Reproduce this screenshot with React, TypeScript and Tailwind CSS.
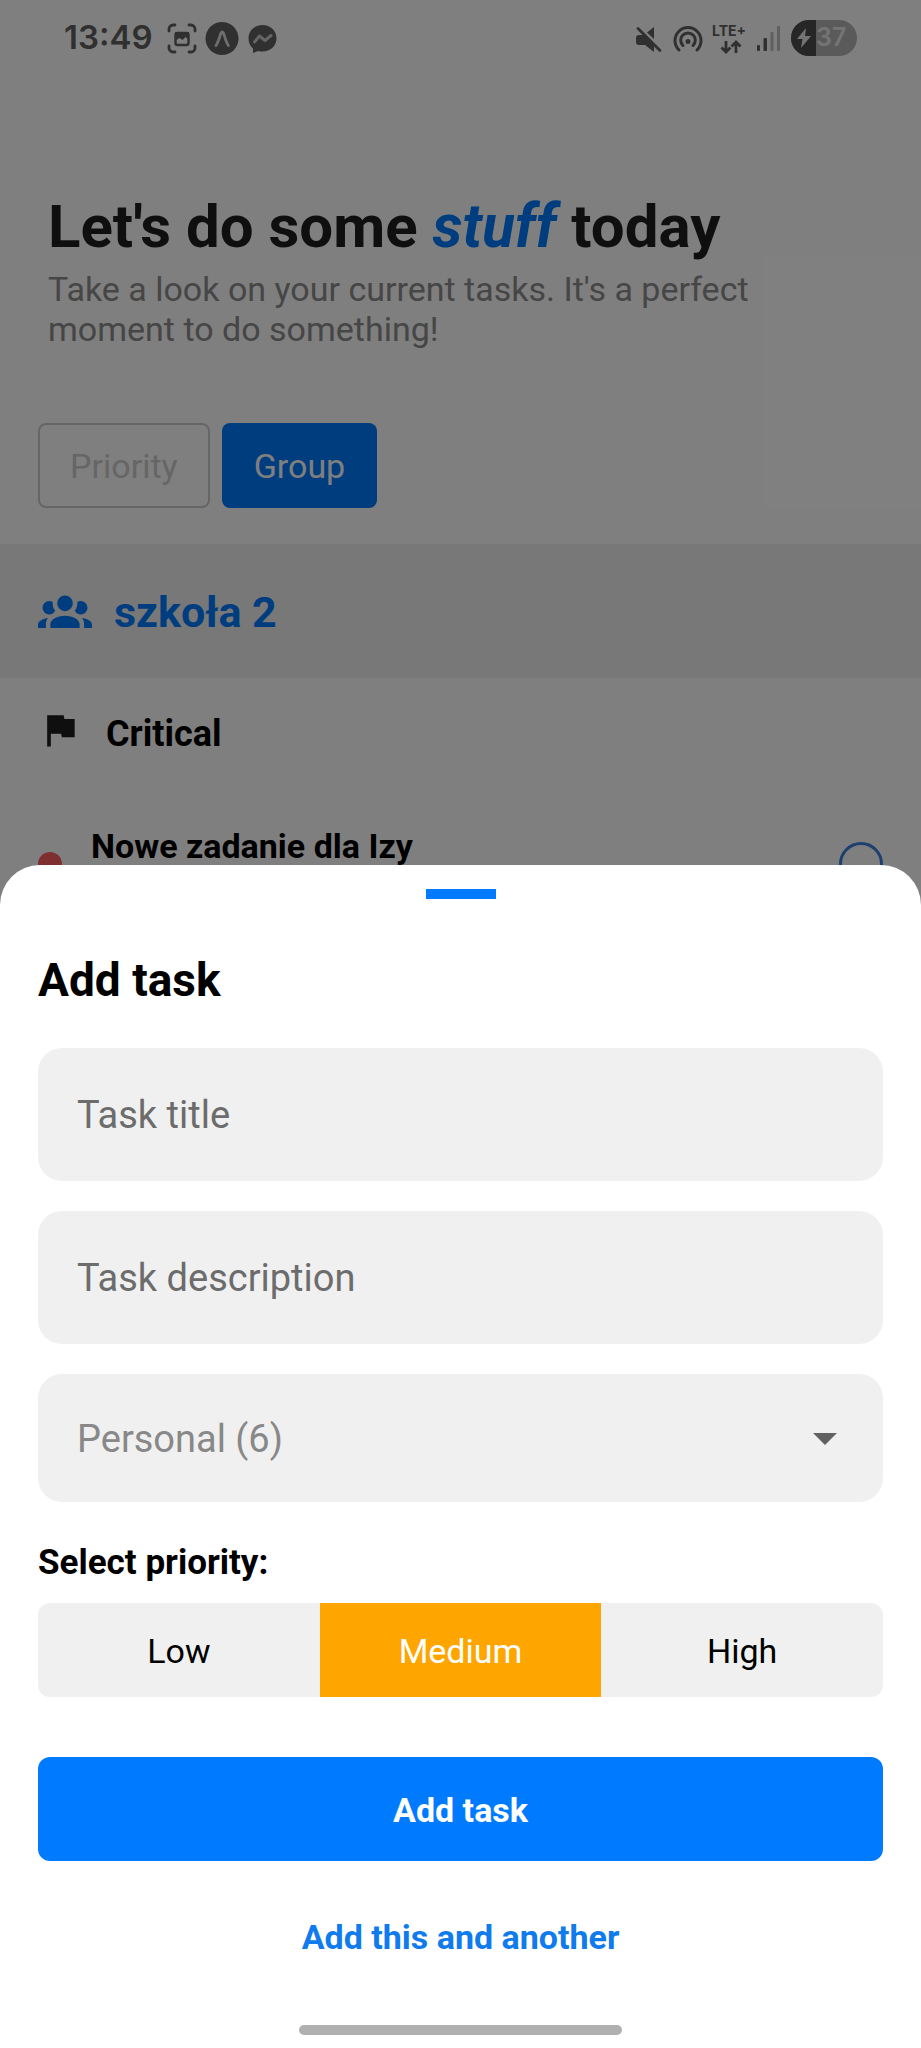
import { useState } from "react";

const FONT = "font-['Roboto','Liberation_Sans',sans-serif]";
const PRIORITIES = ["Low", "Medium", "High"];

function StatusBar() {
  return (
    <header className="flex h-[76px] items-center justify-between px-16 text-[#606060]">
      <div className="flex items-center">
        <time className="w-[102px] font-['Inter','Roboto',sans-serif] text-[33px] font-semibold">13:49</time>
        <svg width="112" height="36" viewBox="0 0 112 36" fill="currentColor" aria-hidden="true">
          <g fill="none" stroke="currentColor" strokeWidth="2.800" strokeLinecap="round">
            <path d="M3 11V9a4 4 0 0 1 4-4h2M23 5h2a4 4 0 0 1 4 4v2M29 26v2a4 4 0 0 1-4 4h-2M9 32H7a4 4 0 0 1-4-4v-2" />
            <rect x="9.500" y="13" width="13" height="12" rx="2" strokeWidth="2.400" />
          </g>
          <path d="M9 12h14v8l-3.500-3-3 3-3-2-4.500 3z" />
          <circle cx="56" cy="18.500" r="16.500" />
          <path d="M50 25.500c2.500-3.500 3.500-8.500 5-12.500q1.200-2 2.400 0c1.500 4 2.500 9 5 12.500" fill="none" stroke="#dcdcdc" strokeWidth="2.800" strokeLinecap="round" />
          <path d="M96.500 5c8 0 14 5.800 14 13.200s-6 13.300-14 13.300c-1.500 0-2.900-.2-4.200-.6L87 33v-4.500c-3-2.400-4.500-6-4.500-10.200C82.500 10.800 88.500 5 96.500 5z" />
          <path d="m88.500 22 5-6 5.500 4.500 6-5" fill="none" stroke="#c8c8c8" strokeWidth="3" strokeLinecap="round" strokeLinejoin="round" />
        </svg>
      </div>
      <div className="flex items-center gap-[10px]">
        <svg width="113" height="36" viewBox="0 0 113 36" fill="currentColor" aria-hidden="true">
          <path d="M2 18q0-3 3-3h4.500L20 26v6l-9-7H5q-3 0-3-3zM20 7v12l-7-6.500z" />
          <path d="M4 8.500 26 30.500" stroke="currentColor" strokeWidth="2.800" strokeLinecap="round" />
          <g fill="none" stroke="currentColor" strokeWidth="3" strokeLinecap="round">
            <path d="M45 30a13 13 0 1 1 18 0" />
            <path d="M49 25.500a7.300 7.300 0 1 1 10 0" />
          </g>
          <circle cx="54" cy="21.500" r="2.500" />
          <path
            d="M92 21v11M87.500 27.500l4.500 4.500 4.500-4.500M102 33V22M97.500 26.500 102 22l4.500 4.500"
            fill="none"
            stroke="currentColor"
            strokeWidth="2.800"
          />
          <text x="78" y="16" fontFamily="Inter, sans-serif" fontSize="14" fontWeight="700">LTE+</text>
        </svg>
        <svg width="24" height="26" viewBox="0 0 24 26" fill="currentColor" aria-hidden="true">
          <rect x="0" y="20" width="3" height="6" rx="1" />
          <rect x="6.500" y="13" width="3.500" height="13" rx="1" />
          <rect x="13.500" y="7" width="3" height="19" rx="1" opacity=".4" />
          <rect x="20" y="1" width="3" height="25" rx="1" opacity=".4" />
        </svg>
        <div className="flex h-9 w-[66px] items-center overflow-hidden rounded-full bg-[#b4b4b4]">
          <span className="flex h-full w-[25px] items-center justify-center bg-[#4c4c4c]">
            <svg width="14" height="20" viewBox="0 0 14 20" fill="#e8e8e8" aria-hidden="true">
              <path d="M9 0 0 11h5.500L4 20l10-12H8z" />
            </svg>
          </span>
          <span className="font-['Inter','Roboto',sans-serif] text-[25px] font-semibold text-[#e8e8e8]">37</span>
        </div>
      </div>
    </header>
  );
}

function GroupIcon() {
  return (
    <svg width="54" height="54" viewBox="0 0 24 24" fill="currentColor" className="mb-1" aria-hidden="true">
      <path d="M12,5.5A3.5,3.5 0 0,1 15.5,9A3.5,3.5 0 0,1 12,12.5A3.5,3.5 0 0,1 8.5,9A3.5,3.5 0 0,1 12,5.5M5,8C5.56,8 6.08,8.15 6.53,8.42C6.38,9.85 6.8,11.27 7.66,12.38C7.16,13.34 6.16,14 5,14A3,3 0 0,1 2,11A3,3 0 0,1 5,8M19,8A3,3 0 0,1 22,11A3,3 0 0,1 19,14C17.84,14 16.84,13.34 16.34,12.38C17.2,11.27 17.62,9.85 17.47,8.42C17.92,8.15 18.44,8 19,8M5.5,18.25C5.5,16.18 8.41,14.5 12,14.5C15.59,14.5 18.5,16.18 18.5,18.25V20H5.5V18.25M0,20V18.5C0,17.11 1.89,15.94 4.45,15.6C3.86,16.28 3.5,17.22 3.5,18.25V20H0M24,20H20.5V18.25C20.5,17.22 20.14,16.28 19.55,15.6C22.11,15.94 24,17.11 24,18.5V20Z" />
    </svg>
  );
}

function FlagIcon() {
  return (
    <svg width="44" height="44" viewBox="0 0 24 24" fill="#1e1e1e" className="mb-2" aria-hidden="true">
      <path d="M14.4,6L14,4H5V21H7V14H12.6L13,16H20V6H14.4Z" />
    </svg>
  );
}

function TaskPage() {
  return (
    <main className="flex flex-col bg-white">
      <StatusBar />
      <section className="px-12 pt-[116px]">
        <h1 className="text-[60px] font-bold leading-[70px] text-[#1e1e1e]">
          Let's do some <em className="text-[#007bff]">stuff</em> today
        </h1>
        <p className="max-w-[760px] pt-[7px] text-[34px] leading-10 text-[#8c8c8c]">
          Take a look on your current tasks. It's a perfect moment to do something!
        </p>
      </section>
      <div className="flex gap-3 px-[38px] pb-9 pt-[74px] text-[34px]">
        <button type="button" className="h-[85px] rounded-lg border-2 border-[#ccc] px-[30px] pt-0.5 text-[#ccc]">Priority</button>
        <button type="button" className="h-[85px] rounded-lg bg-[#007bff] px-8 pt-0.5 text-white">Group</button>
      </div>
      <section>
        <h2 className="flex h-[134px] items-center gap-[22px] bg-[#f0f0f0] px-[38px] pt-0.5 text-[43px] font-bold text-[#007bff]">
          <GroupIcon />
          szkoła 2
        </h2>
        <h3 className="flex h-28 items-center gap-6 px-[38px] text-[36px] font-bold text-black">
          <FlagIcon />
          Critical
        </h3>
        <label className="flex items-start gap-[29px] px-[38px] pt-9 text-[34px] font-bold leading-10 text-black">
          <span className="mt-[26px] size-6 shrink-0 rounded-full bg-[#ff5f5f]" />
          <span className="flex-1">Nowe zadanie dla Izy</span>
          <input type="checkbox" className="mt-4 size-11 appearance-none rounded-full border-3 border-[#3a80dc]" />
        </label>
      </section>
    </main>
  );
}

function AddTaskSheet() {
  const [priority, setPriority] = useState("Medium");
  const field = "block w-full rounded-3xl bg-[#f0f0f0] px-[39px] text-[38px] outline-none";
  return (
    <form
      role="dialog"
      aria-labelledby="sheet-title"
      onSubmit={(event) => event.preventDefault()}
      className="absolute inset-x-0 bottom-0 flex flex-col rounded-t-[40px] bg-white px-[38px] pb-[13px] pt-6"
    >
      <span className="h-[10px] w-[70px] self-center bg-[#007bff]" />
      <h2 id="sheet-title" className="pt-[54px] text-[46px] font-bold leading-[54px] text-black">Add task</h2>
      <div className="flex flex-col gap-[30px] pt-[41px]">
        <input aria-label="Task title" placeholder="Task title" className={`${field} h-[133px] placeholder:text-[#6c6c6c]`} />
        <input aria-label="Task description" placeholder="Task description" className={`${field} h-[133px] placeholder:text-[#6c6c6c]`} />
        <div className="relative">
          <select aria-label="Group" className={`${field} h-32 appearance-none pt-0.5 text-[#888]`}>
            <option>Personal (6)</option>
          </select>
          <svg width="24" height="12" viewBox="0 0 24 12" className="pointer-events-none absolute right-[46px] top-[59px]" aria-hidden="true">
            <path d="M0 0h24L12 12z" fill="#616161" />
          </svg>
        </div>
      </div>
      <fieldset>
        <legend className="pb-5 pt-[41px] text-[35px] font-bold leading-10 text-black">Select priority:</legend>
        <div className="flex overflow-hidden rounded-xl bg-[#f0f0f0]">
          {PRIORITIES.map((name) => (
            <label
              key={name}
              className="flex h-[94px] flex-1 cursor-pointer items-center justify-center pt-0.5 text-[34px] text-black has-checked:bg-[#ffa500] has-checked:text-white"
            >
              <input
                type="radio"
                name="priority"
                value={name}
                checked={priority === name}
                onChange={() => setPriority(name)}
                className="sr-only"
              />
              {name}
            </label>
          ))}
        </div>
      </fieldset>
      <button type="submit" className="mt-[60px] h-[104px] rounded-xl bg-[#007bff] pt-0.5 text-[34px] font-bold text-white">Add task</button>
      <button type="button" className="mt-14 self-center text-[34px] font-bold leading-10 text-[#0f7bec]">Add this and another</button>
      <span className="mt-[68px] h-[10px] w-[323px] self-center rounded-full bg-[#b0b0b0]" />
    </form>
  );
}

export default function App() {
  return (
    <div className={`${FONT} relative min-h-screen overflow-hidden bg-white`}>
      <TaskPage />
      <div className="absolute inset-0 bg-black/50" />
      <AddTaskSheet />
    </div>
  );
}
